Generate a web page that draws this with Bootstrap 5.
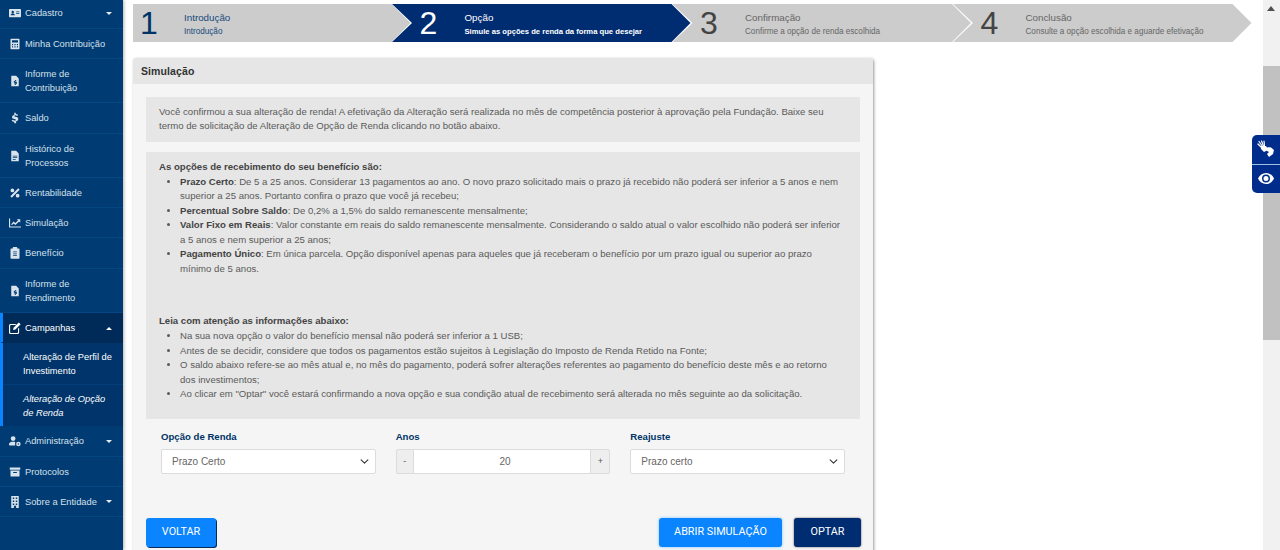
<!DOCTYPE html>
<html lang="pt-BR"><head><meta charset="utf-8"><title>Simulação</title>
<link href="https://cdn.jsdelivr.net/npm/bootstrap@5.3.0/dist/css/bootstrap.min.css" rel="stylesheet">
<style>
html,body{height:550px;overflow:hidden;background:#fff}
body{font-family:"Liberation Sans",Arial,sans-serif;font-size:9.6px;color:#555}
.shell{height:550px}
.side{width:123px;background:#003b73;flex:none;box-shadow:1px 0 3px rgba(0,0,0,.3);overflow:hidden;position:relative}
.side-list{margin-top:-1.6px}
.side-item{display:flex;align-items:center;padding:8px 8px 7.3px 9px;color:#d5e0ea;line-height:14px;border-bottom:1px solid #034682;font-size:9.3px}
.side-item svg.ic{width:12px;height:12px;flex:none;margin-right:4px;fill:#d9e3ec}
.side-item .lbl{flex:1}
.side-item .car{width:0;height:0;border-left:3px solid transparent;border-right:3px solid transparent;border-top:3px solid #e6edf3;margin-right:3px;margin-left:2px}
.open{background:#002b58;color:#fff;border-left:3px solid #0a84ff;padding-left:6px;border-bottom-color:#002b58}
.open svg.ic{fill:#fff!important}
.open .car{border-top:0;border-bottom:3px solid #fff}
.sub-wrap{border-left:3px solid #0a84ff;background:#00346a}
.sub-item{padding:6.5px 8px 6.5px 20px;color:#fff;line-height:14px;font-size:9.3px;border-bottom:1px solid #023f7a}
.sub-item:last-child{border-bottom:0;font-style:italic}
.main-area{flex:1;min-width:0;padding:4px 13px 0 10px}
.steps{height:38px;width:1120px}
.stp{width:299px;flex:none;background:#ccc;color:#666;margin-right:-18.5px;clip-path:polygon(0 0,279.5px 0,298.5px 50%,279.5px 100%,0 100%,20px 50%);padding-left:27.5px;height:38px}
.stp.one{width:278px;clip-path:polygon(0 0,258.5px 0,277.5px 50%,258.5px 100%,0 100%);padding-left:7px;margin-right:-19px;color:#174a7c}
.stp.one .tx{margin-left:28px}
.stp.one .nb{color:#003366}
.stp.act{background:#002d72;color:#fff}
.nb{font-size:32px;line-height:38px;width:16px;color:#444;letter-spacing:-.5px}
.stp.act .nb{color:#fff}
.tx{margin-left:29px;padding-top:7px}
.stt{font-size:9.8px;line-height:13px}
.sbt{font-size:8.15px;line-height:14px;margin-top:1px}
.stp.act .sbt{font-weight:700;font-size:7.65px}
.panel{width:740px;margin-top:16px;border-radius:3px 3px 0 0;background:#f5f5f5;box-shadow:1px 1px 3px rgba(0,0,0,.4)}
.panel-top{background:#e6e6e6;height:26px;line-height:26px;padding-left:8px;font-weight:700;font-size:10.5px;color:#333;letter-spacing:.1px;border-radius:3px 3px 0 0}
.panel-in{padding:13px 13px 0 13px;height:470px}
.info{background:#e6e6e6;padding:7.5px 15px 8.5px 13px;line-height:14.5px;color:#5a5a5a}
.info+.info{margin-top:10px;padding-top:8px;padding-bottom:17.5px}
.info b{color:#444}
.info ul{margin:0;padding-left:21px}
.gapper{height:37.5px}
.gapper+b+ul{margin-top:1px}
.lab{color:#003366;font-weight:700;font-size:9.6px;margin-bottom:6px;line-height:13px;padding-top:11px}
.fields{padding:0 15px;gap:20px}
.fields>div{flex:1;min-width:0}
.form-select.pick{height:25px;font-size:10px;color:#666;border-radius:2px;padding:0 20px 0 10px;border-color:#dcdcdc;background-size:11px 9px;background-position:right 5px center}
.stepper{height:25px;flex-wrap:nowrap}
.stepper .sb{width:18px;height:25px;background:#eee;border:1px solid #dcdcdc;color:#555;font-size:9px;display:flex;align-items:center;justify-content:center;padding:0;flex:none}
.stepper .sb:last-child{width:20px}
.stepper .form-control{height:25px;font-size:10px;color:#666;text-align:center;border-radius:0;border-color:#dcdcdc;padding:0 0 0 6px}
.stepper .sb:first-child{border-radius:2px 0 0 2px}
.stepper .sb:last-child{border-radius:0 2px 2px 0}
.acts{margin-top:44px}
.acts-end{margin-right:-1px}
.bt{font-family:Roboto,sans-serif;font-size:10.8px;height:29px;padding:0;border-radius:3px;color:#fff;border:0;display:flex;align-items:center;justify-content:center}
.bt-blue{background:#0a84ff;width:70px;box-shadow:1px 1px 0 #0a2a5c}
.bt-sim{background:#0a84ff;width:123px;box-shadow:0 0 3px #7cc0ff}
.bt-nav{background:#002d72;width:67px;box-shadow:0 0 2px #555}
.sbar{position:absolute;top:0;right:0;width:17px;height:550px;background:#f1f1f1}
.sbar i{position:absolute;left:3.5px;top:6px;border-left:4.5px solid transparent;border-right:4.5px solid transparent;border-bottom:5px solid #505050}
.sbar em{position:absolute;left:0;top:66px;width:17px;height:274px;background:#c1c1c1}
.a11y{position:absolute;right:0;top:135px;width:28px;height:58px;background:#002d8c;border-radius:5px 0 0 5px;z-index:2;overflow:hidden}
.a11y div{height:28.5px;display:flex;align-items:center;justify-content:center}
.a11y div+div{border-top:1px solid #9fc0e0}
.a11y svg{fill:#fff}
.a11y svg line{stroke:#fff;stroke-width:1.2;stroke-linecap:round}
</style></head>
<body>
<div class="d-flex shell">
<nav class="side">
<div class="side-list">
<div class="side-item"><svg class="ic" viewBox="0 0 16 16"><path d="M1 2.5h14a1 1 0 0 1 1 1v9a1 1 0 0 1-1 1H1a1 1 0 0 1-1-1v-9a1 1 0 0 1 1-1zm4 2.600a1.600 1.600 0 1 0 0 3.200 1.600 1.600 0 0 0 0-3.200zM2.200 11h5.600c0-1.500-1.200-2.200-2.800-2.200S2.200 9.500 2.200 11zM9.500 6v1h4.300V6zm0 2.300v1h4.300v-1z" fill-rule="evenodd"/></svg><span class="lbl">Cadastro</span><span class="car"></span></div>
<div class="side-item"><svg class="ic" viewBox="0 0 16 16"><path d="M3 1h10a1 1 0 0 1 1 1v12a1 1 0 0 1-1 1H3a1 1 0 0 1-1-1V2a1 1 0 0 1 1-1zm1 2v3h8V3zm0 5v1.500h1.500V8zm3.200 0v1.500h1.600V8zm3.300 0v1.500H12V8zM4 11v1.500h1.500V11zm3.200 0v1.500h1.600V11zm3.300 0v1.500H12V11z" fill-rule="evenodd"/></svg><span class="lbl">Minha Contribuição</span></div>
<div class="side-item"><svg class="ic" viewBox="0 0 16 16"><path d="M3 1h6.500L13 4.500V15H3zm5 5.500v1c-1.200.1-1.800.8-1.800 1.600 0 1 .9 1.300 1.800 1.500.5.100.8.200.8.500s-.3.400-.7.400c-.4 0-.8-.1-1.200-.4l-.5.800c.4.300.9.500 1.600.5v.9h1v-1c1-.2 1.600-.9 1.600-1.700 0-1-.8-1.300-1.700-1.500-.6-.1-.9-.2-.9-.5 0-.2.300-.4.600-.4.400 0 .700.100 1 .300l.5-.8c-.3-.2-.7-.4-1.100-.4v-.8z" fill-rule="evenodd"/></svg><span class="lbl">Informe de Contribuição</span></div>
<div class="side-item"><svg class="ic" viewBox="0 0 16 16"><path d="M7 1h2v1.500c1.200.1 2.200.5 3 1.100l-1 1.600c-.8-.5-1.600-.8-2.500-.8-.9 0-1.400.3-1.400.8 0 .6.700.8 2 1.100 2 .5 3.300 1.200 3.300 3 0 1.600-1.200 2.600-2.900 2.900V15H7v-1.800c-1.400-.1-2.600-.6-3.500-1.400l1.100-1.500c.9.700 1.900 1.100 3 1.100 1 0 1.600-.3 1.600-.9s-.6-.8-2-1.200C5.300 9.300 4 8.600 4 6.800c0-1.500 1.200-2.600 3-2.900z"/></svg><span class="lbl">Saldo</span></div>
<div class="side-item"><svg class="ic" viewBox="0 0 16 16"><path d="M3 1h6.500L13 4.500V15H3zm2 6.500v1h6v-1zm0 2.200v1h6v-1zm0 2.200v1h4v-1z" fill-rule="evenodd"/></svg><span class="lbl">Histórico de Processos</span></div>
<div class="side-item"><svg class="ic" viewBox="0 0 16 16"><path d="M12.300 1.800l1.900 1.900L3.700 14.200l-1.900-1.900zM4.500 2a2.500 2.500 0 1 1 0 5 2.500 2.500 0 0 1 0-5zm7 7a2.500 2.500 0 1 1 0 5 2.500 2.500 0 0 1 0-5z"/></svg><span class="lbl">Rentabilidade</span></div>
<div class="side-item"><svg class="ic" viewBox="0 0 16 16"><path d="M0 2h1.500v10.500H16V14H0zM3 9.500l3-3.500 2.500 2L12 4.500 10.500 3H15v4.500l-1.500-1.500-5 4.500L6 8.500 4 11z"/></svg><span class="lbl">Simulação</span></div>
<div class="side-item"><svg class="ic" viewBox="0 0 16 16"><path d="M6 0h4a1 1 0 0 1 1 1v1h2a1 1 0 0 1 1 1v11.500a1 1 0 0 1-1 1H3a1 1 0 0 1-1-1V3a1 1 0 0 1 1-1h2V1a1 1 0 0 1 1-1zm-.500 6v1h5V6zm0 2.500v1h5v-1zm0 2.500v1h5v-1z" fill-rule="evenodd"/></svg><span class="lbl">Benefício</span></div>
<div class="side-item"><svg class="ic" viewBox="0 0 16 16"><path d="M3 1h6.500L13 4.500V15H3zm5 5.500v1c-1.200.1-1.800.8-1.800 1.600 0 1 .9 1.300 1.800 1.500.5.100.8.200.8.500s-.3.400-.7.400c-.4 0-.8-.1-1.200-.4l-.5.800c.4.300.9.500 1.600.5v.9h1v-1c1-.2 1.600-.9 1.600-1.700 0-1-.8-1.300-1.700-1.500-.6-.1-.9-.2-.9-.5 0-.2.300-.4.600-.4.400 0 .700.100 1 .300l.5-.8c-.3-.2-.7-.4-1.100-.4v-.8z" fill-rule="evenodd"/></svg><span class="lbl">Informe de Rendimento</span></div>
<div class="side-item open"><svg class="ic" viewBox="0 0 16 16"><path d="M2 2.500h8L8.500 4H2.500a1 1 0 0 0-1 1v8.500a1 1 0 0 0 1 1H11a1 1 0 0 0 1-1V9l1.500-1.500V14a2 2 0 0 1-2 2H2a2 2 0 0 1-2-2V4.500a2 2 0 0 1 2-2zm11-2l2.500 2.500-7 7-3 .5.500-3z"/></svg><span class="lbl">Campanhas</span><span class="car"></span></div>
<div class="sub-wrap">
<div class="sub-item">Alteração de Perfil de Investimento</div>
<div class="sub-item">Alteração de Opção de Renda</div>
</div>
<div class="side-item"><svg class="ic" viewBox="0 0 16 16"><path d="M5.500 1.500a3.200 3.200 0 1 1 0 6.400 3.200 3.200 0 0 1 0-6.400zM0 14v-1.500C0 10.300 2 9 4 9h3c.4 0 .800.100 1.200.2v4.800H1a1 1 0 0 1-1-1zm12.500-5a3 3 0 1 1 0 6 3 3 0 0 1 0-6zm0 2a1 1 0 1 0 0 2 1 1 0 0 0 0-2z" fill-rule="evenodd"/></svg><span class="lbl">Administração</span><span class="car"></span></div>
<div class="side-item"><svg class="ic" viewBox="0 0 16 16"><path d="M1 2h14v3H1zM2 6h12v8H2zm3.500 2v1.200h5V8z" fill-rule="evenodd"/></svg><span class="lbl">Protocolos</span></div>
<div class="side-item"><svg class="ic" viewBox="0 0 16 16"><path d="M3 0h10v16H9.500v-3h-3v3H3zm2 2v2h2V2zm4 0v2h2V2zM5 6v2h2V6zm4 0v2h2V6zm-4 4v2h2v-2zm4 0v2h2v-2z" fill-rule="evenodd"/></svg><span class="lbl">Sobre a Entidade</span><span class="car"></span></div>
</div>
</nav>
<main class="main-area">
<div class="steps d-flex">
<div class="stp one d-flex"><div class="nb">1</div><div class="tx"><div class="stt">Introdução</div><div class="sbt">Introdução</div></div></div>
<div class="stp act d-flex"><div class="nb">2</div><div class="tx"><div class="stt">Opção</div><div class="sbt">Simule as opções de renda da forma que desejar</div></div></div>
<div class="stp d-flex"><div class="nb">3</div><div class="tx"><div class="stt">Confirmação</div><div class="sbt">Confirme a opção de renda escolhida</div></div></div>
<div class="stp d-flex"><div class="nb">4</div><div class="tx"><div class="stt">Conclusão</div><div class="sbt">Consulte a opção escolhida e aguarde efetivação</div></div></div>
</div>
<section class="panel">
<div class="panel-top">Simulação</div>
<div class="panel-in">
<div class="info">Você confirmou a sua alteração de renda! A efetivação da Alteração será realizada no mês de competência posterior à aprovação pela Fundação. Baixe seu termo de solicitação de Alteração de Opção de Renda clicando no botão abaixo.</div>
<div class="info">
<b>As opções de recebimento do seu benefício são:</b>
<ul>
<li><b>Prazo Certo</b>: De 5 a 25 anos. Considerar 13 pagamentos ao ano. O novo prazo solicitado mais o prazo já recebido não poderá ser inferior a 5 anos e nem superior a 25 anos. Portanto confira o prazo que você já recebeu;</li>
<li><b>Percentual Sobre Saldo</b>: De 0,2% a 1,5% do saldo remanescente mensalmente;</li>
<li><b>Valor Fixo em Reais</b>: Valor constante em reais do saldo remanescente mensalmente. Considerando o saldo atual o valor escolhido não poderá ser inferior a 5 anos e nem superior a 25 anos;</li>
<li><b>Pagamento Único</b>: Em única parcela. Opção disponível apenas para aqueles que já receberam o benefício por um prazo igual ou superior ao prazo mínimo de 5 anos.</li>
</ul>
<div class="gapper"></div>
<b>Leia com atenção as informações abaixo:</b>
<ul>
<li>Na sua nova opção o valor do benefício mensal não poderá ser inferior a 1 USB;</li>
<li>Antes de se decidir, considere que todos os pagamentos estão sujeitos à Legislação do Imposto de Renda Retido na Fonte;</li>
<li>O saldo abaixo refere-se ao mês atual e, no mês do pagamento, poderá sofrer alterações referentes ao pagamento do benefício deste mês e ao retorno dos investimentos;</li>
<li>Ao clicar em "Optar" você estará confirmando a nova opção e sua condição atual de recebimento será alterada no mês seguinte ao da solicitação.</li>
</ul>
</div>
<div class="d-flex fields">
<div><div class="lab">Opção de Renda</div><select class="form-select pick"><option>Prazo Certo</option></select></div>
<div><div class="lab">Anos</div><div class="input-group stepper"><button class="sb" type="button">-</button><input class="form-control" value="20"><button class="sb" type="button">+</button></div></div>
<div><div class="lab">Reajuste</div><select class="form-select pick"><option>Prazo certo</option></select></div>
</div>
<div class="d-flex acts justify-content-between">
<button class="bt bt-blue" type="button">VOLTAR</button>
<div class="d-flex gap-2 acts-end"><button class="bt bt-sim me-1" type="button">ABRIR SIMULAÇÃO</button><button class="bt bt-nav" type="button">OPTAR</button></div>
</div>
</div>
</section>
</main>
</div>
<div class="sbar"><i></i><em></em></div>
<div class="a11y">
<div><svg width="18" height="18" viewBox="0 0 18 18"><line x1="2" y1="1.500" x2="5.500" y2="6.500"/><line x1="4.500" y1="1" x2="6.500" y2="6"/><line x1="7" y1="1" x2="7.500" y2="6"/><line x1="1" y1="4" x2="5" y2="8"/><path d="M4 6h5l1.500 2.500L9 11l-2 1-3-3zM8 8.500c2-1.500 4-1.500 6-1l3 2.500-1 4-4 3-2-3 2-2-3-1.500z"/></svg></div>
<div><svg width="16" height="11" viewBox="0 0 16 11"><path d="M8 0c3.500 0 6.500 2.200 8 5.500C14.500 8.800 11.500 11 8 11S1.500 8.800 0 5.500C1.500 2.200 4.500 0 8 0zm0 1.500a4 4 0 1 0 0 8 4 4 0 0 0 0-8zm0 1.500a2.500 2.500 0 1 1 0 5 2.500 2.500 0 0 1 0-5z" fill-rule="evenodd"/></svg></div>
</div>
</body></html>
